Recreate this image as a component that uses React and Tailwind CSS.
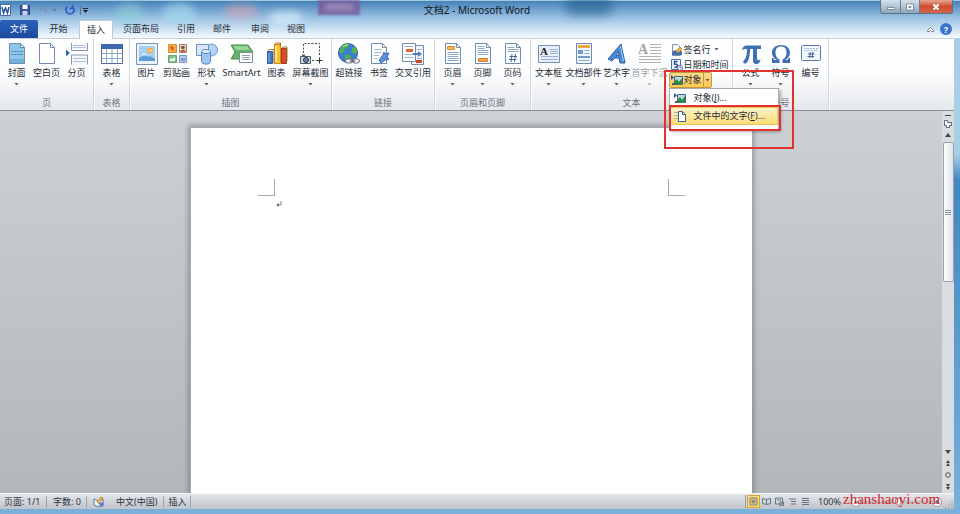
import React, { useState } from 'react'
import clsx from 'clsx'

/* ---------- icons ---------- */

const Svg = ({ children, className = 'h-6 w-6', box = '0 0 24 24' }) => (
  <svg viewBox={box} className={clsx('shrink-0', className)} fill="none" aria-hidden="true">
    {children}
  </svg>
)

const Sheet = ({ fill = '#fff' }) => (
  <path d="M4.500 1.500h11l4 4v16h-15z M15.500 1.500v4h4" fill={fill} stroke="#6f8bb0" />
)

const CoverIcon = () => (
  <Svg>
    <Sheet fill="#8fc5e6" />
    <path d="M15.500 1.500v4h4z" fill="#e4f2fb" stroke="#5b93b8" />
    <path d="M6.500 9.500h11M6.500 12.500h11" stroke="#3d7ea8" strokeDasharray="2 1" />
    <path d="M5 17h14v4H5z" fill="#6fb1d8" />
  </Svg>
)

const BlankIcon = () => (
  <Svg>
    <Sheet />
  </Svg>
)

const BreakIcon = () => (
  <Svg>
    <path d="M6.500 1v7.500h16V1M6.500 22.500V13h16v9.500" fill="#f4f7fb" stroke="#8796ad" />
    <path d="M8 3.500h13M8 5.500h13M8 16.500h13M8 19.500h13" stroke="#b3c1d6" />
    <path d="M1 7.500l4 3.500-4 3.500z" fill="#3568b8" />
  </Svg>
)

const TableIcon = () => (
  <Svg>
    <path d="M1.500 2.500h21v19h-21z" fill="#fff" stroke="#53719f" />
    <path d="M1 2h22v5H1z" fill="#3c68b0" />
    <path d="M1.500 11.500h21M1.500 16.500h21M6.500 7v14M12 7v14M17.500 7v14" stroke="#8fa6c9" />
  </Svg>
)

const PictureIcon = () => (
  <Svg>
    <path d="M1.500 1.500h21v21h-21z" fill="#e9f1fa" stroke="#7993b8" />
    <path d="M4 4h16v15H4z" fill="#a8d0f3" />
    <circle cx="15" cy="8.500" r="2.500" fill="#ffc96c" stroke="#f5a13b" />
    <path d="M4 19v-3l5-4 4 3 2-1 5 3v2z" fill="#5f9bd4" />
    <path d="M5 15l4-4 3 3-3-1z" fill="#fff" />
  </Svg>
)

const ClipArtIcon = () => (
  <Svg>
    <path d="M3.500 2.500h8v8h-8z" fill="#f6ac3a" stroke="#c99045" />
    <path d="M14.500 2.500h7v8h-7z" fill="#e7d6c9" stroke="#a6805f" />
    <path d="M3.500 13.500h8v7h-8z" fill="#79c488" stroke="#68a476" />
    <path d="M14.500 13.500h7v7h-7z" fill="#b6cbee" stroke="#7b94c2" />
    <path d="M5 4l4 1-1 4-2-2z" fill="#dc4f30" />
    <circle cx="18" cy="5.500" r="1.800" fill="#7c4d37" />
    <path d="M15.500 10c0-3 5-3 5 0z" fill="#c34f35" />
    <path d="M5 19v-3l2 1 3-2v4z" fill="#f0fff2" />
    <path d="M16 16h4v3h-4z" fill="#789ad8" />
  </Svg>
)

const ShapesIcon = () => (
  <Svg>
    <circle cx="16.500" cy="8" r="6" fill="#b6d3f3" stroke="#6592cb" />
    <path d="M1.500 2.500h12v11h-12z" fill="#d8e8fa" stroke="#6592cb" />
    <path d="M6.500 9.500v10c0 3.500 9 3.500 9 0v-10" fill="#9cc5f0" stroke="#5586c5" />
    <ellipse cx="11" cy="9.500" rx="4.500" ry="2" fill="#e8f3fd" stroke="#5586c5" />
  </Svg>
)

const SmartArtIcon = () => (
  <Svg>
    <path d="M1 3h17l5 7-5 7H1l4-7z" fill="#64b266" stroke="#479150" />
    <path d="M3 4h14l3 4H6z" fill="#98d597" />
    <path d="M9.500 10.500h13v10h-13z" fill="#fff" stroke="#7f8c99" />
    <path d="M12 13.500h8M12 15.500h8M12 17.500h8" stroke="#8fa2ba" />
  </Svg>
)

const ChartIcon = () => (
  <Svg>
    <path d="M2.500 9.500h5v12h-5z" fill="#3e79c3" stroke="#2f5d9c" />
    <path d="M9.500 2.500h6v19h-6z" fill="#fbc02d" stroke="#d48a10" />
    <path d="M16.500 6.500h5v15h-5z" fill="#da4b2b" stroke="#a93318" />
    <path d="M2.500 9.500l1.500-2h5v14M9.500 2.500L11 1h4.500v2M16.500 6.500L18 5h4v14" stroke="#9d6f30" />
    <path d="M11 4v16" stroke="#ffe68c" strokeWidth="2" />
    <path d="M4 11v9" stroke="#86b3e8" />
  </Svg>
)

const ScreenshotIcon = () => (
  <Svg>
    <path d="M4.500 11V1.500h16v13M13 18.500h4" stroke="#4a4a4a" strokeDasharray="2 1.500" />
    <path d="M20.500 15.500v6M17.500 18.500h6" stroke="#333" />
    <path d="M1.500 14.500h10v7h-10z" fill="#d3d8e0" stroke="#4f5a6b" />
    <path d="M3 12.500h3v2H3z" fill="#4f5a6b" />
    <circle cx="7" cy="18" r="2.500" fill="#6d87b2" stroke="#29364c" />
  </Svg>
)

const LinkIcon = () => (
  <Svg>
    <circle cx="11" cy="11" r="9.500" fill="#3980d1" stroke="#2d5e9f" />
    <path d="M4 5c3-4 8-4 9-3l-3 4-3 1-1 4-4-1zM8 12l5 1 1 3-3 4-3-3zM15 6l4-1 1.500 5-3 2-3-2z" fill="#54b14c" />
    <path d="M6 5c2-2 4-2 5-2" stroke="#c5eebf" />
    <rect x="8.500" y="17" width="7" height="4" rx="2" fill="#eee" stroke="#68727f" />
    <rect x="15.500" y="17" width="7" height="4" rx="2" fill="#eee" stroke="#68727f" />
    <path d="M13 19h5" stroke="#333" />
  </Svg>
)

const BookmarkIcon = () => (
  <Svg>
    <Sheet />
    <path d="M7 7.500h8M7 10.500h8M7 13.500h5M7 16.500h4" stroke="#a9b9d0" />
    <path d="M12 18l4-5 1-3 2 2 3-1-2 4 2 2-4 1-4 3z" fill="#5a91da" stroke="#3869ae" />
  </Svg>
)

const CrossRefIcon = () => (
  <Svg>
    <path d="M10.500 3.500h12v19h-12z" fill="#f3f7fd" stroke="#6f8bb0" />
    <path d="M1.500 1.500h13v18h-13z" fill="#fff" stroke="#6f8bb0" />
    <path d="M3.500 4.500h9M3.500 12.500h9M3.500 15.500h9M16 7.500h5M16 16.500h5" stroke="#9fb3d0" />
    <path d="M5 7h7v3H5z" fill="#e0642b" />
    <path d="M12 11h5V9l4 3-4 3v-2h-5z" fill="#4d7cc6" />
    <path d="M15 18h6v3h-6z" fill="#d9452c" />
  </Svg>
)

const HeaderIcon = () => (
  <Svg>
    <Sheet />
    <path d="M6.500 4.500h7v3h-7z" fill="#f9b74c" stroke="#d98c2b" />
    <path d="M6.500 10.500h11M6.500 12.500h11M6.500 14.500h11M6.500 16.500h11M6.500 18.500h11" stroke="#8fa8cf" />
  </Svg>
)

const FooterIcon = () => (
  <Svg>
    <Sheet />
    <path d="M6.500 4.500h7M6.500 6.500h7M6.500 8.500h11M6.500 10.500h11M6.500 12.500h11" stroke="#8fa8cf" />
    <path d="M7.500 16.500h9v3h-9z" fill="#f9a64c" stroke="#d9802b" />
  </Svg>
)

const PageNumberIcon = () => (
  <Svg>
    <Sheet />
    <path d="M6.500 5.500h7M6.500 7.500h11M6.500 9.500h11" stroke="#8fa8cf" />
    <path d="M11 12l-1 8M14.500 12l-1 8M8.500 14.500h7.500M8 17.500h7.500" stroke="#45679e" />
  </Svg>
)

const TextBoxIcon = () => (
  <Svg>
    <path d="M1.500 3.500h21v17h-21z" fill="#e6effa" stroke="#7490b7" />
    <text x="3" y="13" fontSize="11" fontWeight="700" fill="#222" fontFamily="Liberation Serif, serif">A</text>
    <path d="M13 7.500h8M13 9.500h8M13 11.500h8M4 14.500h17M4 17.500h17" stroke="#9db3d3" />
  </Svg>
)

const PartsIcon = () => (
  <Svg>
    <path d="M4.500 1.500h15v20h-15z" fill="#eef4fc" stroke="#6f8bb0" />
    <path d="M6 3h12v3H6z" fill="#f6a645" />
    <path d="M6 8h5v4H6zM6 14h12v2H6z" fill="#7698d0" />
    <path d="M12.500 8.500h5M12.500 11.500h5M6.500 18.500h11" stroke="#8fa8cf" />
  </Svg>
)

const WordArtIcon = () => (
  <Svg>
    <path d="M3 17L16 2l4 19h-5l-1-5h-4l-3 3zM11 13.500h3l-.8-4z" fill="#4a8ad4" fillRule="evenodd" stroke="#2b5da4" />
    <path d="M15.500 4l3 15" stroke="#a7cef5" />
  </Svg>
)

const DropCapIcon = () => (
  <Svg>
    <text x="0" y="12" fontSize="14" fontWeight="700" fill="#a5a5a5" fontFamily="Liberation Serif, serif">A</text>
    <path d="M12 2.500h11M12 5.500h11M12 8.500h11M12 11.500h11M1 14.500h22M1 17.500h22M1 20.500h22" stroke="#b3b3b3" />
  </Svg>
)

const PiIcon = () => (
  <Svg>
    <path
      d="M3 8c1-4 3-4.500 6-4.500h13v3.500h-4v9c0 3 2 2.500 3.500 1.500-.5 3-2 4.500-4 4.500-3 0-3.500-2-3.500-4V7h-3c0 6-1 12-3.500 14-2 1.500-4-.5-3-2 3-3 3.500-7 3.500-12C5.500 7 4.500 7 3 8z"
      fill="#3f6fb5"
    />
  </Svg>
)

const OmegaIcon = () => (
  <Svg>
    <path
      d="M3 21v-5h1.500c.3 1.500 1 2 2 2H8C4.500 16 3 13.500 3 10.500 3 6 7 3 12 3s9 3 9 7.500c0 3-1.500 5.500-5 7.500h1.500c1 0 1.700-.5 2-2H21v5h-7.500v-3.500c2.500-1 4-3.500 4-7 0-4-2-6-5.500-6s-5.500 2-5.500 6c0 3.500 1.500 6 4 7V21z"
      fill="#3f6fb5"
    />
  </Svg>
)

const NumberIcon = () => (
  <Svg>
    <rect x="2.500" y="3.500" width="19" height="15" rx="1" fill="#f3f7fc" stroke="#5877a6" />
    <path d="M5 6.500h14" stroke="#9db3d3" strokeDasharray="2 1" />
    <path d="M5 8.500h14" stroke="#c5d2e5" />
    <path d="M11.500 10l-1 6M14 10l-1 6M9 12h6.500M8.500 14.500h6.500" stroke="#45679e" />
  </Svg>
)

const SignatureIcon = () => (
  <Svg className="h-3 w-3" box="0 0 12 12">
    <path d="M1.500.5h5l3 3v8h-8z" fill="#fff" stroke="#7d8ea8" />
    <path d="M1 8l3-2 3 2 4-1v4H1z" fill="#456fae" />
    <path d="M5 7l4-4 2 2-4 4z" fill="#f3b33c" stroke="#a36b19" strokeWidth=".6" />
  </Svg>
)

const DateIcon = () => (
  <Svg className="h-3 w-3" box="0 0 12 12">
    <path d="M.5.5h9v10h-9z" fill="#eef4fc" stroke="#4770ad" />
    <path d="M6.500 2.500H3.500V5c4-.5 4 3.500 0 3.500" stroke="#244f96" strokeWidth="1.400" />
    <circle cx="9" cy="9" r="2.500" fill="#fff" stroke="#4770ad" />
    <path d="M9 7.500V9h1.200" stroke="#333" strokeWidth=".6" />
  </Svg>
)

const ObjectIcon = () => (
  <Svg className="h-3 w-3" box="0 0 12 12">
    <path d="M3.500 2.500h8v8h-8z" fill="#b9dbe8" stroke="#45627b" />
    <path d="M0 1l3 2.500L0 6z" fill="#28549c" />
    <path d="M3 11V8l3-3 2 3 3-4v7z" fill="#2f8a45" />
    <path d="M1 9h4v2H1z" fill="#4a5f6d" />
  </Svg>
)

const FileTextIcon = () => (
  <Svg className="h-3 w-3" box="0 0 12 12">
    <path d="M0 2.500h4M0 5.500h4M0 8.500h4" stroke="#a3b0c2" />
    <path d="M4.500 1.500h4l3 3v7h-7z" fill="#fff" stroke="#47608a" />
    <path d="M8.500 1.500v3h3" stroke="#47608a" />
  </Svg>
)

/* ---------- ribbon ---------- */

const Caret = ({ faded }) => (
  <svg viewBox="0 0 5 3" className="h-[3px] w-[5px] shrink-0" aria-hidden="true">
    <path d="M.5 0h4l-2 2.500z" fill={faded ? '#b5b5b5' : '#5f5f5f'} />
  </svg>
)

const tabs = [
  { label: '开始', width: 'w-[41px]' },
  { label: '插入', width: 'w-[34px]' },
  { label: '页面布局', width: 'w-14' },
  { label: '引用', width: 'w-[34px]' },
  { label: '邮件', width: 'w-[38px]' },
  { label: '审阅', width: 'w-[38px]' },
  { label: '视图', width: 'w-[34px]' },
]

function BigButton({ icon: Icon, label, width = 'w-[30px]', menu, disabled }) {
  return (
    <button
      type="button"
      disabled={disabled}
      className={clsx('flex shrink-0 flex-col items-center whitespace-nowrap', width, disabled && 'text-[#a0a0a0]')}
    >
      <Icon />
      <span className="mt-px leading-3">{label}</span>
      <span className="mt-1">{menu && <Caret faded={disabled} />}</span>
    </button>
  )
}

function Group({ title, width, children }) {
  return (
    <section
      className={clsx(
        'flex shrink-0 flex-col justify-between border-r border-[#d3d7dd] shadow-[1px_0_0_#fff]',
        width
      )}
    >
      <div className="flex justify-center pt-[3px]">{children}</div>
      <h2 className="pb-px text-center leading-3 text-[#6a7280]">{title}</h2>
    </section>
  )
}

function ObjectMenu() {
  return (
    <ul className="absolute top-full left-0 z-20 w-[110px] border border-[#a7abb0] bg-white shadow-[2px_2px_3px_rgba(0,0,0,0.3)]">
      <li>
        <button type="button" className="flex h-[18px] w-full items-center gap-2 pl-1 whitespace-nowrap">
          <ObjectIcon />
          <span>
            对象(<u>J</u>)...
          </span>
        </button>
      </li>
      <li className="relative">
        <button
          type="button"
          className="flex h-[18px] w-full items-center gap-2 border border-[#edc95c] bg-linear-to-b from-[#fdf3c7] to-[#fbdc78] pl-[3px] whitespace-nowrap"
        >
          <FileTextIcon />
          <span>
            文件中的文字(<u>F</u>)...
          </span>
        </button>
        <div className="pointer-events-none absolute -top-[2px] -right-[3px] -bottom-[6px] -left-px border-2 border-[#e0322f]" />
      </li>
      <li className="h-1" />
    </ul>
  )
}

function TextColumn() {
  const [open, setOpen] = useState(true)
  return (
    <div className="relative flex w-16 shrink-0 flex-col items-start pl-px">
      <button type="button" className="flex h-[15px] items-center gap-px pl-[2px] whitespace-nowrap">
        <SignatureIcon />
        签名行
        <span className="pl-[2px]"><Caret /></span>
      </button>
      <button type="button" className="flex h-[15px] items-center gap-px pl-[2px] whitespace-nowrap">
        <DateIcon />
        日期和时间
      </button>
      <div className="relative">
        <button
          type="button"
          aria-expanded={open}
          onClick={() => setOpen(!open)}
          className="flex h-4 items-center gap-px rounded-[2px] border border-[#c79a3c] bg-linear-to-b from-[#fbdb8a] to-[#fdc850] pl-px whitespace-nowrap"
        >
          <ObjectIcon />
          对象
          <span className="flex h-full w-2 items-center justify-center border-l border-[#c79a3c]">
            <Caret />
          </span>
        </button>
        {open && <ObjectMenu />}
      </div>
      <div className="pointer-events-none absolute top-7 -left-1 z-30 h-[79px] w-[130px] border-2 border-[#e0322f]" />
    </div>
  )
}

function Ribbon() {
  return (
    <div className="flex h-[73px] shrink-0 border-t border-b border-t-[#c3cedb] border-b-[#8b9097] bg-linear-to-b from-white via-[#fbfcfd] to-[#e5e8ec]">
      <Group title="页" width="w-[94px]">
        <BigButton icon={CoverIcon} label="封面" menu />
        <BigButton icon={BlankIcon} label="空白页" />
        <BigButton icon={BreakIcon} label="分页" />
      </Group>
      <Group title="表格" width="w-9">
        <BigButton icon={TableIcon} label="表格" menu />
      </Group>
      <Group title="插图" width="w-[202px]">
        <BigButton icon={PictureIcon} label="图片" />
        <BigButton icon={ClipArtIcon} label="剪贴画" />
        <BigButton icon={ShapesIcon} label="形状" menu />
        <BigButton icon={SmartArtIcon} label="SmartArt" width="w-10" />
        <BigButton icon={ChartIcon} label="图表" />
        <BigButton icon={ScreenshotIcon} label="屏幕截图" width="w-[38px]" menu />
      </Group>
      <Group title="链接" width="w-[103px]">
        <BigButton icon={LinkIcon} label="超链接" />
        <BigButton icon={BookmarkIcon} label="书签" />
        <BigButton icon={CrossRefIcon} label="交叉引用" width="w-[38px]" />
      </Group>
      <Group title="页眉和页脚" width="w-24">
        <BigButton icon={HeaderIcon} label="页眉" menu />
        <BigButton icon={FooterIcon} label="页脚" menu />
        <BigButton icon={PageNumberIcon} label="页码" menu />
      </Group>
      <Group title="文本" width="w-[202px]">
        <BigButton icon={TextBoxIcon} label="文本框" width="w-[34px]" menu />
        <BigButton icon={PartsIcon} label="文档部件" width="w-9" menu />
        <BigButton icon={WordArtIcon} label="艺术字" menu />
        <BigButton icon={DropCapIcon} label="首字下沉" width="w-9" menu disabled />
        <TextColumn />
      </Group>
      <Group title="符号" width="w-24">
        <BigButton icon={PiIcon} label="公式" menu />
        <BigButton icon={OmegaIcon} label="符号" menu />
        <BigButton icon={NumberIcon} label="编号" />
      </Group>
    </div>
  )
}

/* ---------- window chrome ---------- */

// windows behind the translucent title bar
function GlassBackdrop() {
  return (
    <div className="pointer-events-none absolute inset-0 overflow-hidden">
      <div className="absolute top-1 left-[115px] h-5 w-7 rounded-full bg-[#8fd0d8] opacity-60 blur-[5px]" />
      <div className="absolute top-1 left-[163px] h-5 w-8 rounded-full bg-[#a4dbf0] opacity-70 blur-[4px]" />
      <div className="absolute top-[6px] left-[225px] h-3 w-8 rounded-full bg-[#e2a7ae] opacity-60 blur-[4px]" />
      <div className="absolute top-3 left-[270px] h-3 w-8 rounded-full bg-[#dff3ff] opacity-70 blur-[4px]" />
      <div className="absolute top-0 left-[318px] h-[15px] w-[42px] bg-[#7a5a9b] opacity-80 blur-[1px]" />
      <div className="absolute top-1 left-[325px] h-[6px] w-7 bg-[#b79dc4] opacity-60 blur-[2px]" />
      <div className="absolute -top-1 left-[565px] h-5 w-12 rounded-full bg-[#1d5788] opacity-50 blur-[5px]" />
    </div>
  )
}

function TitleBar() {
  return (
    <header className="relative grid h-5 shrink-0 grid-cols-3 items-center">
      <div className="flex items-center gap-2">
        <Svg className="h-3 w-3" box="0 0 12 12">
          <path d="M.5.5h10v11H.5z" fill="#fff" stroke="#3e6cab" />
          <path d="M2 3l1.500 6L5.500 4l2 5L9 3" stroke="#23539c" strokeWidth="1.500" />
        </Svg>
        <button type="button" aria-label="保存">
          <Svg className="h-[10px] w-[10px]" box="0 0 10 10">
            <path d="M.5.5h9v9h-9z" fill="#3c52ae" stroke="#2d3b85" />
            <path d="M2.500 0h5v4h-5z" fill="#fff" />
            <path d="M2.500 6h5v4h-5z" fill="#c8d2ee" />
          </Svg>
        </button>
        <button type="button" aria-label="撤消" className="flex items-center gap-1 opacity-60">
          <Svg className="h-[10px] w-[10px]" box="0 0 10 10">
            <path d="M3 1L1 4l3 1.500M1.500 4C6 1 9 4 7 8.500" stroke="#8a86a8" strokeWidth="1.500" />
          </Svg>
          <Caret />
        </button>
        <button type="button" aria-label="重复">
          <Svg className="h-[10px] w-[10px]" box="0 0 10 10">
            <path d="M2 1.500C-.5 5 2 9 5 9s6-4 2.500-6.500M7.500 0v3.500h-3" stroke="#3058c8" strokeWidth="1.700" />
          </Svg>
        </button>
        <button type="button" aria-label="自定义" className="-ml-[3px] border-l border-[#5b7593] py-[2px] pl-[2px]">
          <Svg className="h-[5px] w-[5px]" box="0 0 5 5">
            <path d="M0 .5h5" stroke="#222" />
            <path d="M0 2h5L2.500 5z" fill="#222" />
          </Svg>
        </button>
      </div>
      <h1 className="text-center text-[10px] leading-4 whitespace-nowrap text-[#101820]">文档2 - Microsoft Word</h1>
      <div className="mr-px flex h-[14px] self-start justify-self-end overflow-hidden rounded-b-[3px] border border-t-0 border-[#5e7287]">
        <button type="button" aria-label="最小化" className="flex w-5 items-center justify-center border-r border-[#6c8197] bg-linear-to-b from-[#d5e1ea] to-[#8fa7bb]">
          <Svg className="h-2 w-2" box="0 0 8 8">
            <path d="M.5 4.500h7v2h-7z" fill="#fff" stroke="#4c5b6b" strokeWidth=".6" />
          </Svg>
        </button>
        <button type="button" aria-label="最大化" className="flex w-[19px] items-center justify-center border-r border-[#6c8197] bg-linear-to-b from-[#d5e1ea] to-[#8fa7bb]">
          <Svg className="h-2 w-2" box="0 0 8 8">
            <path d="M.5 1h7v6h-7zM3 3.500h2v1H3z" fill="#fff" fillRule="evenodd" stroke="#4c5b6b" strokeWidth=".6" />
          </Svg>
        </button>
        <button type="button" aria-label="关闭" className="flex w-8 items-center justify-center bg-linear-to-b from-[#e3a591] via-[#cf4a30] to-[#d1664a]">
          <Svg className="h-2 w-2" box="0 0 8 8">
            <path d="M1.500 1.500l5 5M6.500 1.500l-5 5" stroke="#fff" strokeWidth="2" />
          </Svg>
        </button>
      </div>
    </header>
  )
}

function TabBar() {
  const [active, setActive] = useState('插入')
  return (
    <nav className="relative flex h-[18px] shrink-0 items-stretch">
      <button type="button" className="w-[38px] rounded-t-[2px] bg-linear-to-b from-[#2a62b9] to-[#1c4aa0] text-white">
        文件
      </button>
      {tabs.map((tab) => (
        <button
          key={tab.label}
          type="button"
          onClick={() => setActive(tab.label)}
          className={clsx(
            'shrink-0 whitespace-nowrap',
            tab.width,
            active === tab.label && 'relative -mb-px rounded-t-[2px] border border-b-0 border-[#b9c9da] bg-white'
          )}
        >
          {tab.label}
        </button>
      ))}
      <div className="ml-auto flex items-center gap-[6px] pr-[2px]">
        <button type="button" aria-label="折叠功能区">
          <Svg className="h-[7px] w-[7px]" box="0 0 7 7">
            <path d="M.5 5.500v-1l3-3 3 3v1h-2l-1-1-1 1z" fill="#fff" stroke="#5a6b80" strokeWidth=".8" />
          </Svg>
        </button>
        <button type="button" aria-label="帮助" className="flex h-3 w-3 items-center justify-center rounded-full bg-[#3b74cc] font-bold leading-none text-white">
          ?
        </button>
      </div>
    </nav>
  )
}

function ScrollBar() {
  return (
    <div className="flex w-3 shrink-0 flex-col items-center bg-[#d9dde2] pt-1">
      <div className="h-px w-[6px] bg-[#444]" />
      <button type="button" aria-label="标尺" className="mt-1">
        <Svg className="h-2 w-2" box="0 0 8 8">
          <path d="M.5.5h3v2h4v3h-2v2h-3v-2h-2z" fill="#fff" stroke="#5b6470" />
        </Svg>
      </button>
      <button type="button" aria-label="向上" className="flex h-[14px] items-center">
        <Svg className="h-1 w-[6px]" box="0 0 6 4">
          <path d="M0 4h6L3 0z" fill="#444" />
        </Svg>
      </button>
      <div className="flex h-[140px] w-[11px] flex-col items-center justify-center gap-px rounded-[2px] border border-[#9aa1aa] bg-linear-to-r from-white to-[#dfe3e8]">
        <div className="h-px w-[6px] bg-[#8c939c]" />
        <div className="h-px w-[6px] bg-[#8c939c]" />
        <div className="h-px w-[6px] bg-[#8c939c]" />
      </div>
      <div className="mt-auto flex flex-col items-center gap-[6px] pb-[3px]">
        <Svg className="h-1 w-[6px]" box="0 0 6 4">
          <path d="M0 0h6L3 4z" fill="#444" />
        </Svg>
        <Svg className="h-[6px] w-[6px]" box="0 0 6 6">
          <path d="M1 3h4L3 0zM1 6h4L3 3z" fill="#444" />
        </Svg>
        <Svg className="h-[6px] w-[6px]" box="0 0 6 6">
          <circle cx="3" cy="3" r="2.300" stroke="#555" />
        </Svg>
        <Svg className="h-[6px] w-[6px]" box="0 0 6 6">
          <path d="M1 0h4L3 3zM1 3h4L3 6z" fill="#444" />
        </Svg>
      </div>
    </div>
  )
}

function Page() {
  return (
    <article className="mx-auto mt-4 h-full w-[562px] border-t border-l border-[#a5a9ae] bg-white px-[67px] pt-[51px] shadow-[0_0_5px_2px_rgba(70,75,80,0.4)]">
      <div className="flex justify-between">
        <div className="h-[17px] w-[17px] border-r border-b border-[#a9a9a9]" />
        <div className="h-[17px] w-[17px] border-b border-l border-[#a9a9a9]" />
      </div>
      <p className="mt-1 pl-[17px]">
        <Svg className="h-2 w-2" box="0 0 8 8">
          <path d="M6 1v4H3" stroke="#888" />
          <path d="M1 5l3-2v4z" fill="#777" />
        </Svg>
      </p>
    </article>
  )
}

const views = [
  { label: '页面视图', d: 'M1 1h7v7H1zM2.500 3h4M2.500 4.500h4M2.500 6h4' },
  { label: '阅读版式', d: 'M.5 1.500l4 1 4-1v5l-4 1-4-1zM4.500 2.500v5' },
  { label: 'Web 版式', d: 'M.5 1h7v6h-7zM2 3h4M5 5h3.500v3.500H5z' },
  { label: '大纲', d: 'M1 2h7M3 4.500h5M3 7h5' },
  { label: '草稿', d: 'M1 1.500h7M1 3.500h7M1 5.500h7M1 7.500h7' },
]

function StatusBar() {
  return (
    <footer className="flex h-4 shrink-0 items-center border-t border-[#f4f6f8] bg-linear-to-b from-[#e4e7eb] to-[#bfc4ca] whitespace-nowrap text-[#2c3440]">
      <span className="w-[47px] border-r border-[#9ca3ab] pl-1 leading-3">页面: 1/1</span>
      <span className="w-10 border-r border-[#9ca3ab] pl-[6px] leading-3">字数: 0</span>
      <span className="pl-[6px]">
        <Svg className="h-3 w-3" box="0 0 12 12">
          <path d="M1 3l5 2 4-2v6l-4 2-5-2z" fill="#f1f4fb" stroke="#6578a3" />
          <path d="M4 6l4-5 2 1-4 6z" fill="#f5bb4a" stroke="#8c6828" strokeWidth=".6" />
          <circle cx="8.500" cy="8.500" r="2.200" fill="#5b7fd0" />
        </Svg>
      </span>
      <span className="ml-[11px] border-r border-[#9ca3ab] pr-[6px] leading-3">中文(中国)</span>
      <span className="border-r border-[#9ca3ab] px-1 leading-3">插入</span>
      <div className="ml-auto flex items-center border-l border-[#9ca3ab] pl-px">
        {views.map((view, i) => (
          <button
            key={view.label}
            type="button"
            aria-label={view.label}
            className={clsx(
              'flex h-[13px] w-[13px] items-center justify-center',
              i === 0 && 'border border-[#d9a32e] bg-[#fbdd84]'
            )}
          >
            <Svg className="h-[9px] w-[9px]" box="0 0 9 9">
              <path d={view.d} stroke="#5e6b7c" strokeWidth=".9" />
            </Svg>
          </button>
        ))}
      </div>
      <span className="pl-[6px] leading-3">100%</span>
      <div className="relative flex w-[104px] items-center pl-2">
        <Svg className="h-[10px] w-[94px]" box="0 0 94 10">
          <path d="M10 5h74" stroke="#a5abb3" />
          <circle cx="7" cy="5" r="4.500" fill="#fff" stroke="#8f969e" />
          <path d="M5 5h4" stroke="#444" />
          <path d="M46.500 1.500h5v5l-2.500 2-2.500-2z" fill="#fff" stroke="#8f969e" />
          <circle cx="88" cy="5" r="4.500" fill="#fff" stroke="#8f969e" />
          <path d="M86 5h4M88 3v4" stroke="#444" />
        </Svg>
        <span className="absolute bottom-0 left-[2px] font-['Liberation_Serif',serif] text-[15px] leading-4 text-[#d6252b]">
          zhanshaoyi.com
        </span>
      </div>
      <Svg className="h-[9px] w-[9px] self-end" box="0 0 9 9">
        <path d="M6 8h2M6 5h2M3 8h2M6 2h2M3 5h2M0 8h2" stroke="#9aa3ae" />
      </Svg>
    </footer>
  )
}

export default function App() {
  return (
    <div className="flex h-screen flex-col overflow-hidden bg-linear-to-b from-[#a9cfe6] from-30% via-[#3f88c2] via-35% to-[#79b1da] pr-[6px] pb-[5px] font-['Noto_Sans','Noto_Sans_CJK_SC',sans-serif] text-[9px] text-[#262d36]">
      <div className="relative -mr-[6px] shrink-0 bg-linear-to-b from-[#3f7fb6] via-[#a0c5e5] to-[#f6fafe] pr-[6px] shadow-[inset_0_1px_0_#a5c8de]">
        <GlassBackdrop />
        <TitleBar />
        <TabBar />
      </div>
      <Ribbon />
      <main className="flex min-h-0 flex-1">
        <div className="min-w-0 flex-1 overflow-hidden bg-linear-to-b from-[#cdd0d4] to-[#b3b7bb]">
          <Page />
        </div>
        <ScrollBar />
      </main>
      <StatusBar />
    </div>
  )
}
